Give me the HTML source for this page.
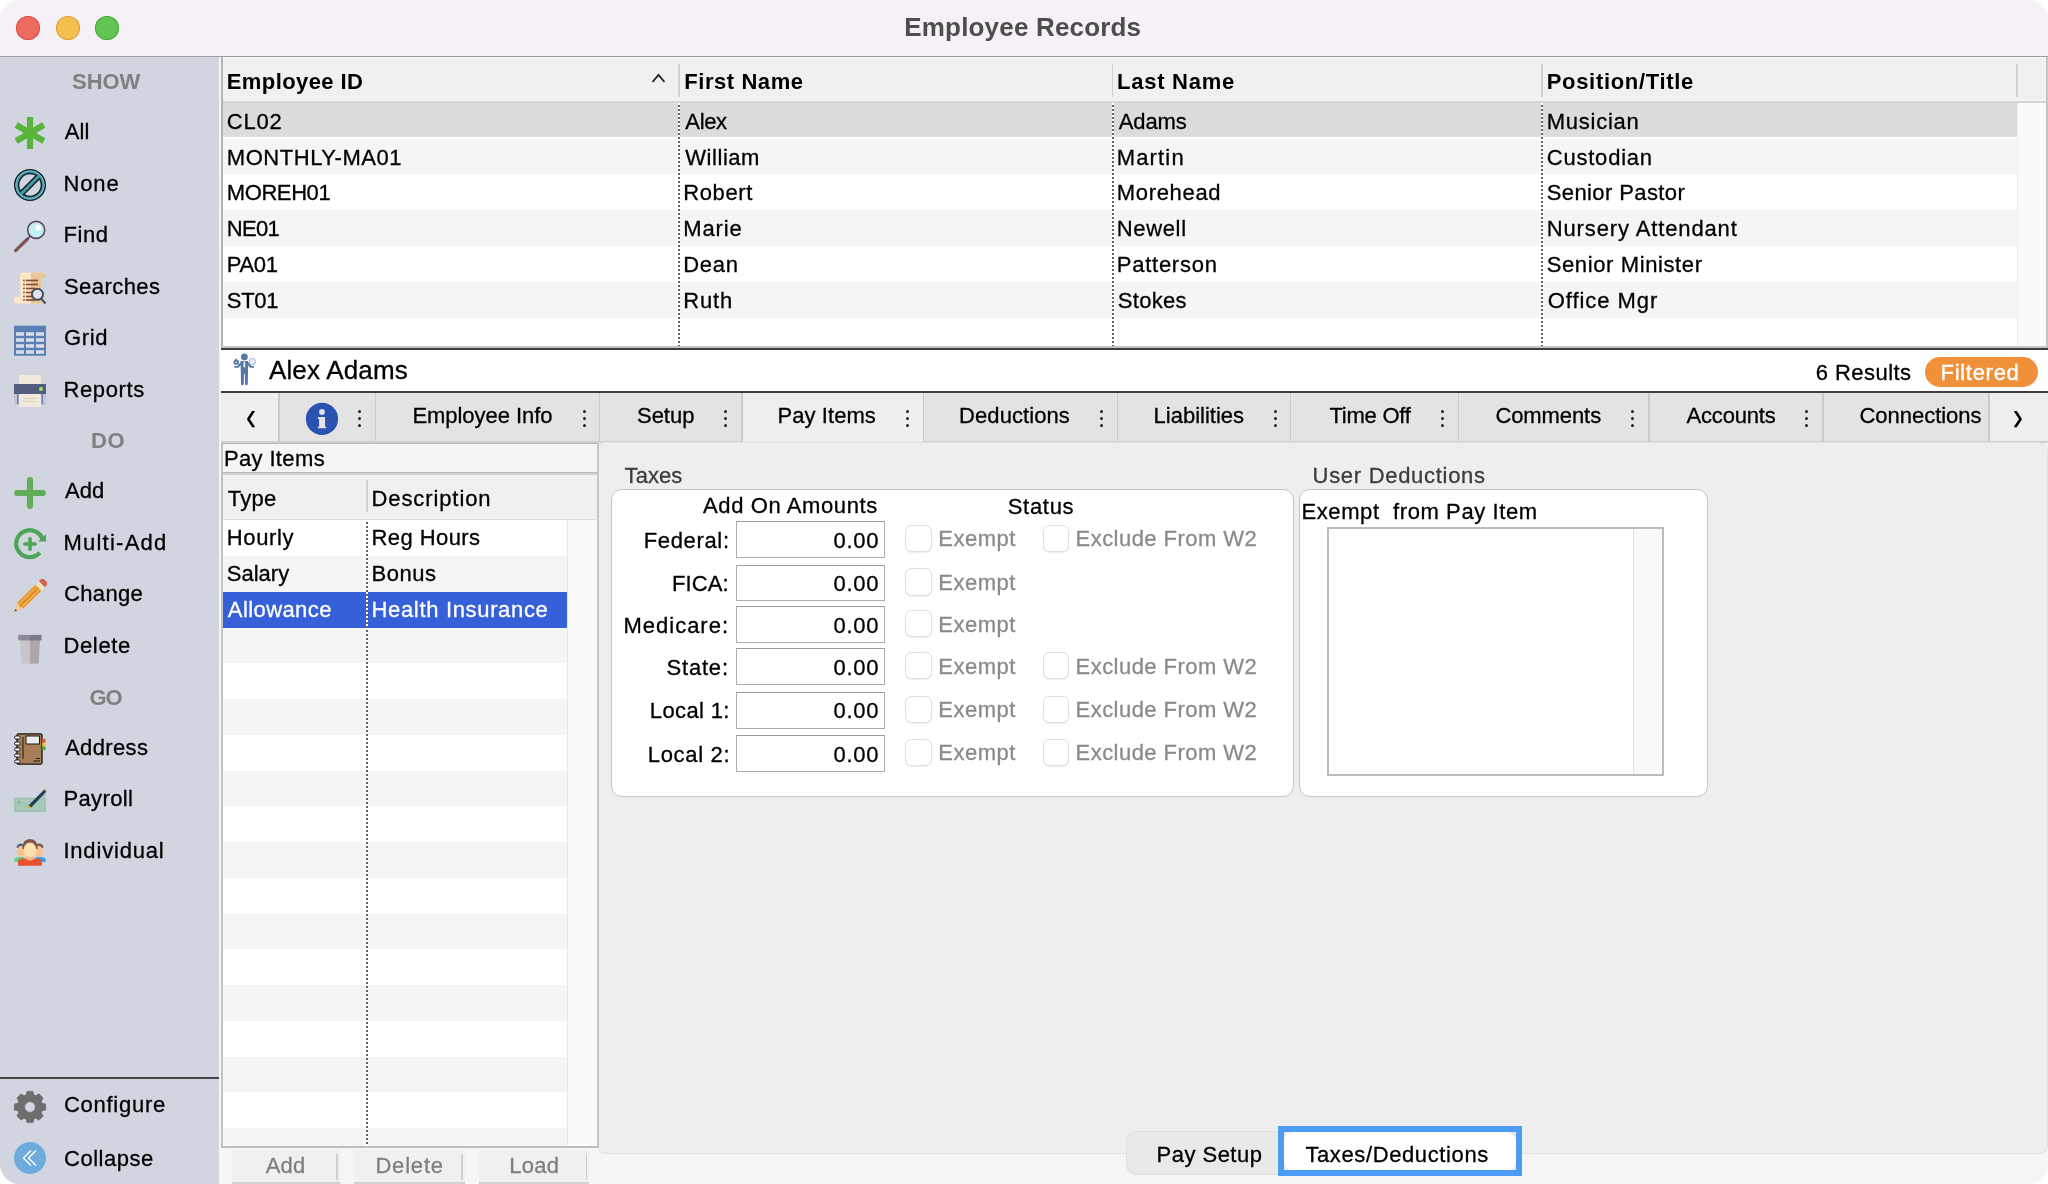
<!DOCTYPE html>
<html><head><meta charset="utf-8"><title>Employee Records</title>
<style>
html,body{margin:0;padding:0;background:#fff;}
body{width:2048px;height:1184px;overflow:hidden;position:relative;font-family:"Liberation Sans",sans-serif;}
#win{position:absolute;left:0;top:0;width:2048px;height:1184px;border-radius:20px;overflow:hidden;background:#f6f6f6;}
.t{position:absolute;white-space:pre;line-height:1;will-change:opacity;}
.r{position:absolute;}
.i{position:absolute;overflow:visible;}
.dot{position:absolute;width:2px;background:repeating-linear-gradient(to bottom,#fff 0,#fff 2px,#626262 2px,#626262 4px);}
</style></head><body><div id="win">

<div class="r" style="left:0.00px;top:0.00px;width:2048.00px;height:56.00px;background:#f6f0f7;"></div>
<div class="r" style="left:0.00px;top:55.60px;width:2048.00px;height:1.40px;background:#9e9e9e;"></div>
<div class="r" style="left:16px;top:15.7px;width:24px;height:24px;border-radius:50%;background:#ec6a5e;box-shadow:inset 0 0 0 1px #d55246;"></div>
<div class="r" style="left:56px;top:15.7px;width:24px;height:24px;border-radius:50%;background:#f5bf4f;box-shadow:inset 0 0 0 1px #d9a13c;"></div>
<div class="r" style="left:95.3px;top:15.7px;width:24px;height:24px;border-radius:50%;background:#61c554;box-shadow:inset 0 0 0 1px #4ea73f;"></div>
<div class="t" id="t0" style="top:14px;font-size:26px;color:#4d4d4d;font-weight:700;letter-spacing:0.180px;left:904.25px;">Employee Records</div>
<div class="r" style="left:0.00px;top:57.00px;width:218.80px;height:1127.00px;background:#d1d5df;"></div>
<div class="r" style="left:218.80px;top:57.00px;width:2.40px;height:1127.00px;background:#f6f6f6;"></div>
<div class="t" id="t1" style="top:71px;font-size:22px;color:#808080;font-weight:700;letter-spacing:-0.067px;left:72.08px;">SHOW</div>
<div class="t" id="t2" style="top:430px;font-size:22px;color:#808080;font-weight:700;letter-spacing:0.700px;left:91.00px;">DO</div>
<div class="t" id="t3" style="top:687px;font-size:22px;color:#808080;font-weight:700;letter-spacing:-1.000px;left:89.49px;">GO</div>
<div class="t" id="t4" style="top:121px;font-size:22px;color:#000;-webkit-text-stroke:0.3px #000;letter-spacing:0.150px;left:64.70px;">All</div>
<svg class="i" style="left:14px;top:117.0px" width="32" height="32" viewBox="0 0 32 32"><g stroke="#5ab43c" stroke-width="6.2" stroke-linecap="butt"><line x1="16" y1="0" x2="16" y2="32"/><line x1="2.2" y1="8" x2="29.8" y2="24"/><line x1="2.2" y1="24" x2="29.8" y2="8"/></g></svg>
<div class="t" id="t5" style="top:173px;font-size:22px;color:#000;-webkit-text-stroke:0.3px #000;letter-spacing:0.900px;left:63.40px;">None</div>
<svg class="i" style="left:14px;top:168.8px" width="32" height="32" viewBox="0 0 32 32"><circle cx="16" cy="16" r="15.2" fill="none" stroke="#12222a" stroke-width="1.7"/><circle cx="16" cy="16" r="13.2" fill="none" stroke="#4699a9" stroke-width="2.9"/><circle cx="16" cy="16" r="14" fill="none" stroke="#9ad6de" stroke-width="0.7" opacity="0.7"/><circle cx="16" cy="16" r="11.4" fill="none" stroke="#12222a" stroke-width="1.5"/><line x1="7.6" y1="24.4" x2="24.4" y2="7.6" stroke="#12222a" stroke-width="5.8"/><line x1="6.8" y1="25.2" x2="25.2" y2="6.8" stroke="#4699a9" stroke-width="2.9"/></svg>
<div class="t" id="t6" style="top:224px;font-size:22px;color:#000;-webkit-text-stroke:0.3px #000;letter-spacing:0.633px;left:63.40px;">Find</div>
<svg class="i" style="left:14px;top:220.2px" width="32" height="32" viewBox="0 0 32 32"><line x1="1.6" y1="30.6" x2="13.2" y2="19.2" stroke="#80554f" stroke-width="3.3" stroke-linecap="round"/><line x1="12.6" y1="19.8" x2="16.6" y2="15.8" stroke="#5b4a5c" stroke-width="1.8"/><circle cx="22.2" cy="9.9" r="8.5" fill="#c6f0f8" stroke="#5b4a5c" stroke-width="1.6"/><circle cx="24.4" cy="7.8" r="2.7" fill="#fff"/></svg>
<div class="t" id="t7" style="top:276px;font-size:22px;color:#000;-webkit-text-stroke:0.3px #000;letter-spacing:0.443px;left:64.00px;">Searches</div>
<svg class="i" style="left:14px;top:271.8px" width="32" height="32" viewBox="0 0 32 32"><path d="M6 3 Q6 0.5 9 0.5 L29 0.5 Q32 0.5 32 3 L32 6 L27 6 L27 31.5 L3 31.5 Q0 31.5 0 28.5 L0 25 L6 25 Z" fill="#fbe6c6"/><path d="M17 0.5 L29 0.5 Q32 0.5 32 3 L32 6 L27 6 L27 31.5 L17 31.5 Z" fill="#e8c596"/><g stroke="#8f4a32" stroke-width="1.7"><line x1="12" y1="8.5" x2="24" y2="8.5"/><line x1="12" y1="12.5" x2="24" y2="12.5"/><line x1="12" y1="16.5" x2="21" y2="16.5"/><line x1="12" y1="20.5" x2="19" y2="20.5"/><line x1="12" y1="24.5" x2="19" y2="24.5"/><line x1="12" y1="28" x2="21" y2="28"/></g><g fill="#8f4a32"><circle cx="10" cy="8.5" r="0.9"/><circle cx="10" cy="12.5" r="0.9"/><circle cx="10" cy="16.5" r="0.9"/><circle cx="10" cy="20.5" r="0.9"/><circle cx="10" cy="24.5" r="0.9"/><circle cx="10" cy="28" r="0.9"/></g><line x1="27.5" y1="27" x2="31.5" y2="31.5" stroke="#4b4b55" stroke-width="2"/><circle cx="23.5" cy="22.3" r="5.5" fill="#dde1f2" stroke="#484c56" stroke-width="2"/></svg>
<div class="t" id="t8" style="top:327px;font-size:22px;color:#000;-webkit-text-stroke:0.3px #000;letter-spacing:0.600px;left:64.00px;">Grid</div>
<svg class="i" style="left:14px;top:323.4px" width="32" height="32" viewBox="0 0 32 32"><rect x="0" y="2.7" width="32" height="30" fill="#5a7fb6"/><rect x="2" y="9.2" width="8" height="3.6" fill="#d8dce6"/><rect x="12" y="9.2" width="8" height="3.6" fill="#d8dce6"/><rect x="22" y="9.2" width="8" height="3.6" fill="#d8dce6"/><rect x="2" y="15.2" width="8" height="3.6" fill="#d8dce6"/><rect x="12" y="15.2" width="8" height="3.6" fill="#d8dce6"/><rect x="22" y="15.2" width="8" height="3.6" fill="#d8dce6"/><rect x="2" y="21.2" width="8" height="3.6" fill="#d8dce6"/><rect x="12" y="21.2" width="8" height="3.6" fill="#d8dce6"/><rect x="22" y="21.2" width="8" height="3.6" fill="#d8dce6"/><rect x="2" y="27.2" width="8" height="3.6" fill="#d8dce6"/><rect x="12" y="27.2" width="8" height="3.6" fill="#d8dce6"/><rect x="22" y="27.2" width="8" height="3.6" fill="#d8dce6"/></svg>
<div class="t" id="t9" style="top:379px;font-size:22px;color:#000;-webkit-text-stroke:0.3px #000;letter-spacing:0.633px;left:63.40px;">Reports</div>
<svg class="i" style="left:14px;top:375.0px" width="32" height="32" viewBox="0 0 32 32"><rect x="5" y="0" width="22" height="12" fill="#efeadb"/><rect x="0" y="17" width="32" height="13" fill="#c4c6c9"/><rect x="3" y="17" width="1.6" height="12" fill="#6f7fc0"/><rect x="27.4" y="17" width="1.6" height="12" fill="#6f7fc0"/><rect x="0" y="9" width="32" height="10" fill="#555d80"/><circle cx="27" cy="14" r="2" fill="#9fe65c"/><rect x="5" y="19" width="22" height="13" fill="#efeadb"/><line x1="9" y1="23.5" x2="23" y2="23.5" stroke="#d8d2b4" stroke-width="1"/><line x1="9" y1="26.5" x2="23" y2="26.5" stroke="#d8d2b4" stroke-width="1"/></svg>
<div class="t" id="t10" style="top:480px;font-size:22px;color:#000;-webkit-text-stroke:0.3px #000;left:65.00px;">Add</div>
<svg class="i" style="left:14px;top:476.7px" width="32" height="32" viewBox="0 0 32 32"><g stroke="#62ad5c" stroke-width="6.2" stroke-linecap="round"><line x1="16" y1="3.2" x2="16" y2="28.8"/><line x1="3.2" y1="16" x2="28.8" y2="16"/></g></svg>
<div class="t" id="t11" style="top:532px;font-size:22px;color:#000;-webkit-text-stroke:0.3px #000;letter-spacing:1.250px;left:63.40px;">Multi-Add</div>
<svg class="i" style="left:14px;top:528.1px" width="32" height="32" viewBox="0 0 32 32"><path d="M 25.8 24.7 A 13.5 13.5 0 1 1 28.8 12.4" fill="none" stroke="#4ea457" stroke-width="4.2"/><path d="M32 6 L32 13.6 L24.2 13.4 Z" fill="#4ea457"/><g stroke="#4ea457" stroke-width="3.6" stroke-linecap="round"><line x1="16" y1="10.8" x2="16" y2="21.2"/><line x1="10.8" y1="16" x2="21.2" y2="16"/></g></svg>
<div class="t" id="t12" style="top:583px;font-size:22px;color:#000;-webkit-text-stroke:0.3px #000;letter-spacing:0.340px;left:64.00px;">Change</div>
<svg class="i" style="left:14px;top:579.5px" width="32" height="32" viewBox="0 0 32 32"><g transform="rotate(45 16 16)"><path d="M11.8 -0.5 L11.8 -2.5 Q11.8 -6 16 -6 Q20.2 -6 20.2 -2.5 L20.2 -0.5 Z" fill="#d2614f"/><rect x="11.8" y="-0.5" width="8.4" height="4.7" fill="#f1ecd2"/><rect x="11.8" y="0.8" width="8.4" height="0.9" fill="#d6d6cf"/><rect x="11.8" y="2.6" width="8.4" height="0.9" fill="#f3e58f"/><rect x="11.8" y="4.2" width="8.4" height="25.8" fill="#e9942d"/><rect x="14.3" y="4.2" width="3.4" height="26.8" fill="#e48d2a"/><line x1="14.1" y1="4.2" x2="14.1" y2="31" stroke="#f4d568" stroke-width="0.9"/><line x1="17.9" y1="4.2" x2="17.9" y2="31" stroke="#f4d568" stroke-width="0.9"/><path d="M11.8 30 L14.1 31.5 L16 30.3 L17.9 31.5 L20.2 30 L16.6 38 L15.4 38 Z" fill="#f6c99b"/><path d="M15 35.3 L17 35.3 L16 38.2 Z" fill="#2c2f3a"/></g></svg>
<div class="t" id="t13" style="top:635px;font-size:22px;color:#000;-webkit-text-stroke:0.3px #000;letter-spacing:0.670px;left:63.40px;">Delete</div>
<svg class="i" style="left:14px;top:631.2px" width="32" height="32" viewBox="0 0 32 32"><rect x="11.4" y="2.6" width="9.2" height="1.6" fill="#dcdad8"/><path d="M6 9 L16 9 L16 32.8 L7.4 32.8 Z" fill="#c8c5ca"/><path d="M16 9 L26 9 L24.6 32.8 L16 32.8 Z" fill="#aaa8ae"/><rect x="4.2" y="3.9" width="11.8" height="5.5" fill="#8d8a97"/><rect x="16" y="3.9" width="11.6" height="5.5" fill="#7c7988"/></svg>
<div class="t" id="t14" style="top:737px;font-size:22px;color:#000;-webkit-text-stroke:0.3px #000;letter-spacing:0.383px;left:65.00px;">Address</div>
<svg class="i" style="left:14px;top:733.0px" width="32" height="32" viewBox="0 0 32 32"><rect x="3" y="0.8" width="25" height="30.4" rx="1.5" fill="#a67f59" stroke="#1a1a1a" stroke-width="1.3"/><line x1="9" y1="4" x2="9" y2="26" stroke="#1a1a1a" stroke-width="1"/><rect x="12" y="3" width="13.5" height="8" fill="#e9ebee" stroke="#1a1a1a" stroke-width="1"/><rect x="28.2" y="6" width="3.3" height="3.6" fill="#e2572b"/><rect x="28.2" y="9.8" width="3.3" height="3.6" fill="#f0c330"/><rect x="28.2" y="13.6" width="3.3" height="3.6" fill="#4caa3a"/><g fill="#fff" stroke="#1a1a1a" stroke-width="1"><rect x="0.5" y="3" width="5.6" height="3" rx="1.5"/><rect x="0.5" y="9" width="5.6" height="3" rx="1.5"/><rect x="0.5" y="15" width="5.6" height="3" rx="1.5"/><rect x="0.5" y="21" width="5.6" height="3" rx="1.5"/><rect x="0.5" y="27" width="5.6" height="3" rx="1.5"/></g><line x1="22" y1="25.5" x2="26" y2="25.5" stroke="#1a1a1a" stroke-width="1"/><line x1="19.5" y1="28" x2="26" y2="28" stroke="#1a1a1a" stroke-width="1"/></svg>
<div class="t" id="t15" style="top:788px;font-size:22px;color:#000;-webkit-text-stroke:0.3px #000;letter-spacing:0.383px;left:63.40px;">Payroll</div>
<svg class="i" style="left:14px;top:787.5px" width="32" height="32" viewBox="0 0 32 32"><rect x="0" y="9.8" width="32" height="14.2" fill="#a6c9b9"/><rect x="0.9" y="10.7" width="30.2" height="12.4" fill="none" stroke="#96bdab" stroke-width="0.8"/><rect x="3.2" y="12.8" width="3.2" height="3.4" fill="#8fb7a5"/><path d="M3 18.5 L12 18.5 M9 15 L20 21" stroke="#9bc0af" stroke-width="0.9" fill="none"/><path d="M30.2 1.6 L32.4 3.8 L17.2 19.4 L14.6 17.2 Z" fill="#1f4256"/><path d="M31 5.5 L32.3 6.8 L25.6 13.8 L24.6 12.6 Z" fill="#aebbc2"/><path d="M17.2 19.4 L14.6 17.2 L13 20.6 Z" fill="#e8aa28"/><path d="M31.2 0.4 L32.6 1.8 L31.6 3 L30 1.6 Z" fill="#e8aa28"/></svg>
<div class="t" id="t16" style="top:840px;font-size:22px;color:#000;-webkit-text-stroke:0.3px #000;letter-spacing:0.817px;left:63.40px;">Individual</div>
<svg class="i" style="left:14px;top:839.0px" width="32" height="32" viewBox="0 0 32 32"><path d="M0 22 Q0 18 5 18 L10 18 L10 23 L0 23 Z" fill="#5fd88a"/><path d="M32 22 Q32 18 27 18 L22 18 L22 23 L32 23 Z" fill="#3da0f0"/><path d="M2.6 9 Q2.6 4.5 7 4.5 Q10 4.5 10 9 Z" fill="#5a5e8a"/><path d="M29.4 9 Q29.4 4.5 25 4.5 Q22 4.5 22 9 Z" fill="#7a5548"/><ellipse cx="7.2" cy="12.5" rx="4.2" ry="5.8" fill="#f7c28e"/><ellipse cx="24.8" cy="12.5" rx="4.2" ry="5.8" fill="#f7c28e"/><path d="M4 22.5 Q4 19.5 8 19.5 L24 19.5 Q28 19.5 28 22.5 L28 25.7 Q28 26.8 27 26.8 L5 26.8 Q4 26.8 4 25.7 Z" fill="#e8532f"/><path d="M12 17 L20 17 L20 20 Q16 23.5 12 20 Z" fill="#f4b684"/><path d="M8.5 10 Q8 0 16 0 Q24 0 23.5 10 Z" fill="#7a5548"/><ellipse cx="16" cy="11" rx="6.4" ry="7.6" fill="#fde0b0"/></svg>
<div class="t" id="t17" style="top:1094px;font-size:22px;color:#000;-webkit-text-stroke:0.3px #000;letter-spacing:0.725px;left:64.00px;">Configure</div>
<svg class="i" style="left:14px;top:1090.5px" width="32" height="32" viewBox="0 0 32 32"><path fill-rule="evenodd" fill="#6e6e6e" stroke="#6e6e6e" stroke-width="0.8" stroke-linejoin="round" d="M12.25,3.87 L13.00,0.39 L19.00,0.39 L19.75,3.87 L21.93,4.77 L24.92,2.84 L29.16,7.08 L27.23,10.07 L28.13,12.25 L31.61,13.00 L31.61,19.00 L28.13,19.75 L27.23,21.93 L29.16,24.92 L24.92,29.16 L21.93,27.23 L19.75,28.13 L19.00,31.61 L13.00,31.61 L12.25,28.13 L10.07,27.23 L7.08,29.16 L2.84,24.92 L4.77,21.93 L3.87,19.75 L0.39,19.00 L0.39,13.00 L3.87,12.25 L4.77,10.07 L2.84,7.08 L7.08,2.84 L10.07,4.77 Z M21.4,16 A5.4,5.4 0 1,0 10.6,16 A5.4,5.4 0 1,0 21.4,16 Z"/></svg>
<div class="t" id="t18" style="top:1148px;font-size:22px;color:#000;-webkit-text-stroke:0.3px #000;letter-spacing:0.521px;left:64.00px;">Collapse</div>
<svg class="i" style="left:14px;top:1142.0px" width="32" height="32" viewBox="0 0 32 32"><circle cx="16" cy="16" r="16" fill="#6eabdd"/><g fill="none" stroke="#fff" stroke-width="1.4"><polyline points="17,8.5 9.5,16 17,23.5"/><polyline points="22,8.5 14.5,16 22,23.5"/></g></svg>
<div class="r" style="left:0.00px;top:1077.00px;width:218.80px;height:2.00px;background:#444;"></div>
<div class="r" style="left:221.20px;top:57.00px;width:1.50px;height:291.00px;background:#b4b4b4;"></div>
<div class="r" style="left:2046.20px;top:57.00px;width:1.80px;height:291.00px;background:#c4c4c4;"></div>
<div class="r" style="left:222.60px;top:57.00px;width:1823.60px;height:1.00px;background:#f8f8f8;"></div>
<div class="r" style="left:222.60px;top:58.00px;width:1823.60px;height:43.50px;background:#f0f0f0;"></div>
<div class="r" style="left:222.60px;top:100.00px;width:1823.60px;height:1.00px;background:#f5f5f5;"></div>
<div class="r" style="left:222.60px;top:101.00px;width:1823.60px;height:1.60px;background:#d4d4d4;"></div>
<div class="r" style="left:222.60px;top:102.60px;width:1823.60px;height:243.00px;background:#fff;"></div>
<div class="r" style="left:222.60px;top:102.60px;width:1794.60px;height:34.60px;background:#dcdcdc;"></div>
<div class="r" style="left:222.60px;top:138.56px;width:1794.60px;height:35.86px;background:#f4f5f5;"></div>
<div class="r" style="left:222.60px;top:210.28px;width:1794.60px;height:35.86px;background:#f4f5f5;"></div>
<div class="r" style="left:222.60px;top:282.00px;width:1794.60px;height:35.86px;background:#f4f5f5;"></div>
<div class="r" style="left:2017.20px;top:102.60px;width:29.00px;height:243.00px;background:#fafafa;"></div>
<div class="r" style="left:2017.20px;top:102.60px;width:1.00px;height:243.00px;background:#ececec;"></div>
<div class="r" style="left:678.00px;top:64.00px;width:1.60px;height:32.50px;background:#d0d0d0;"></div>
<div class="r" style="left:1111.80px;top:64.00px;width:1.60px;height:32.50px;background:#d0d0d0;"></div>
<div class="r" style="left:1541.20px;top:64.00px;width:1.60px;height:32.50px;background:#d0d0d0;"></div>
<div class="r" style="left:2016.40px;top:64.00px;width:1.60px;height:32.50px;background:#d0d0d0;"></div>
<div class="dot" style="left:678px;top:103px;height:242.6px;"></div>
<div class="dot" style="left:1112px;top:103px;height:242.6px;"></div>
<div class="dot" style="left:1541px;top:103px;height:242.6px;"></div>
<div class="t" id="t19" style="top:71px;font-size:22px;color:#000;font-weight:700;letter-spacing:0.400px;left:226.80px;">Employee ID</div>
<div class="t" id="t20" style="top:71px;font-size:22px;color:#000;font-weight:700;letter-spacing:0.556px;left:684.30px;">First Name</div>
<div class="t" id="t21" style="top:71px;font-size:22px;color:#000;font-weight:700;letter-spacing:0.750px;left:1117.00px;">Last Name</div>
<div class="t" id="t22" style="top:71px;font-size:22px;color:#000;font-weight:700;letter-spacing:0.673px;left:1546.75px;">Position/Title</div>
<svg class="i" style="left:651px;top:72px" width="16" height="12" viewBox="0 0 16 12"><polyline points="1.5,10 7.5,3 13.5,10" fill="none" stroke="#222" stroke-width="1.8"/></svg>
<div class="t" id="t23" style="top:111px;font-size:22px;color:#000;-webkit-text-stroke:0.3px #000;letter-spacing:0.750px;left:226.80px;">CL02</div>
<div class="t" id="t24" style="top:111px;font-size:22px;color:#000;-webkit-text-stroke:0.3px #000;letter-spacing:-0.333px;left:685.30px;">Alex</div>
<div class="t" id="t25" style="top:111px;font-size:22px;color:#000;-webkit-text-stroke:0.3px #000;letter-spacing:-0.125px;left:1118.75px;">Adams</div>
<div class="t" id="t26" style="top:111px;font-size:22px;color:#000;-webkit-text-stroke:0.3px #000;letter-spacing:0.750px;left:1546.75px;">Musician</div>
<div class="t" id="t27" style="top:147px;font-size:22px;color:#000;-webkit-text-stroke:0.3px #000;letter-spacing:0.545px;left:226.80px;">MONTHLY-MA01</div>
<div class="t" id="t28" style="top:147px;font-size:22px;color:#000;-webkit-text-stroke:0.3px #000;letter-spacing:0.542px;left:685.30px;">William</div>
<div class="t" id="t29" style="top:147px;font-size:22px;color:#000;-webkit-text-stroke:0.3px #000;letter-spacing:1.150px;left:1116.75px;">Martin</div>
<div class="t" id="t30" style="top:147px;font-size:22px;color:#000;-webkit-text-stroke:0.3px #000;letter-spacing:0.781px;left:1546.75px;">Custodian</div>
<div class="t" id="t31" style="top:182px;font-size:22px;color:#000;-webkit-text-stroke:0.3px #000;letter-spacing:-0.417px;left:226.80px;">MOREH01</div>
<div class="t" id="t32" style="top:182px;font-size:22px;color:#000;-webkit-text-stroke:0.3px #000;letter-spacing:0.600px;left:683.30px;">Robert</div>
<div class="t" id="t33" style="top:182px;font-size:22px;color:#000;-webkit-text-stroke:0.3px #000;letter-spacing:0.679px;left:1116.75px;">Morehead</div>
<div class="t" id="t34" style="top:182px;font-size:22px;color:#000;-webkit-text-stroke:0.3px #000;letter-spacing:0.396px;left:1546.75px;">Senior Pastor</div>
<div class="t" id="t35" style="top:218px;font-size:22px;color:#000;-webkit-text-stroke:0.3px #000;letter-spacing:-0.667px;left:226.80px;">NE01</div>
<div class="t" id="t36" style="top:218px;font-size:22px;color:#000;-webkit-text-stroke:0.3px #000;letter-spacing:0.875px;left:683.30px;">Marie</div>
<div class="t" id="t37" style="top:218px;font-size:22px;color:#000;-webkit-text-stroke:0.3px #000;letter-spacing:0.650px;left:1116.75px;">Newell</div>
<div class="t" id="t38" style="top:218px;font-size:22px;color:#000;-webkit-text-stroke:0.3px #000;letter-spacing:0.875px;left:1546.75px;">Nursery Attendant</div>
<div class="t" id="t39" style="top:254px;font-size:22px;color:#000;-webkit-text-stroke:0.3px #000;letter-spacing:-0.333px;left:226.80px;">PA01</div>
<div class="t" id="t40" style="top:254px;font-size:22px;color:#000;-webkit-text-stroke:0.3px #000;letter-spacing:0.666px;left:683.30px;">Dean</div>
<div class="t" id="t41" style="top:254px;font-size:22px;color:#000;-webkit-text-stroke:0.3px #000;letter-spacing:0.750px;left:1116.75px;">Patterson</div>
<div class="t" id="t42" style="top:254px;font-size:22px;color:#000;-webkit-text-stroke:0.3px #000;letter-spacing:0.607px;left:1546.75px;">Senior Minister</div>
<div class="t" id="t43" style="top:290px;font-size:22px;color:#000;-webkit-text-stroke:0.3px #000;letter-spacing:-0.333px;left:226.80px;">ST01</div>
<div class="t" id="t44" style="top:290px;font-size:22px;color:#000;-webkit-text-stroke:0.3px #000;letter-spacing:0.833px;left:683.30px;">Ruth</div>
<div class="t" id="t45" style="top:290px;font-size:22px;color:#000;-webkit-text-stroke:0.3px #000;letter-spacing:0.300px;left:1117.75px;">Stokes</div>
<div class="t" id="t46" style="top:290px;font-size:22px;color:#000;-webkit-text-stroke:0.3px #000;letter-spacing:0.944px;left:1547.75px;">Office Mgr</div>
<div class="r" style="left:221.20px;top:345.60px;width:1827.00px;height:2.20px;background:#c4c4c4;"></div>
<div class="r" style="left:221.00px;top:347.80px;width:1827.00px;height:1.90px;background:#3e3e3e;"></div>
<div class="r" style="left:221.20px;top:349.70px;width:1827.00px;height:41.30px;background:#fff;"></div>
<div class="r" style="left:221.00px;top:391.00px;width:1827.00px;height:1.90px;background:#3e3e3e;"></div>
<div class="t" id="t47" style="top:357px;font-size:26px;color:#000;-webkit-text-stroke:0.3px #000;letter-spacing:0.178px;left:268.90px;">Alex Adams</div>
<div class="t" id="t48" style="top:362px;font-size:22px;color:#000;-webkit-text-stroke:0.3px #000;letter-spacing:0.462px;left:1815.73px;">6 Results</div>
<div class="r" style="left:1924.7px;top:357.4px;width:113.6px;height:29.4px;border-radius:15px;background:#f0913a;"></div>
<div class="t" id="t49" style="top:362px;font-size:22px;color:#fff;letter-spacing:0.707px;left:1940.50px;-webkit-text-stroke:0.4px #fff;">Filtered</div>
<svg class="i" style="left:230px;top:350px" width="30" height="40" viewBox="230 350 30 40"><g fill="#5878aa"><circle cx="244.4" cy="356.9" r="3.4"/><path d="M241.6 361 L247.2 361 Q248.2 361 248.2 362.2 L248 373 L247.8 384 Q247.8 385.2 246.4 385.2 Q245.1 385.2 245 384 L244.8 374 L244 374 L243.8 384 Q243.7 385.2 242.4 385.2 Q241 385.2 241 384 L240.8 373 L240.6 362.2 Q240.6 361 241.6 361 Z"/><path d="M241.2 361.2 L237.4 366 L234.9 366 Q234.2 366 234.2 366.9 Q234.2 367.8 234.9 367.8 L238.6 367.8 L241.4 364.6 Z"/><path d="M247.6 361.2 L251.4 366 L253.6 366 Q254.3 366 254.3 366.9 Q254.3 367.8 253.6 367.8 L250.2 367.8 L247.4 364.6 Z"/><circle cx="236.2" cy="362.3" r="2.7"/><path d="M234.9 358.6 L236.2 360 L237.6 358.6" stroke="#5878aa" stroke-width="0.9" fill="none"/></g><path d="M243.8 361.6 L245 361.6 L245.3 366.4 L244.4 367.8 L243.5 366.4 Z" fill="#fff"/><circle cx="236.2" cy="362.4" r="0.9" fill="#c9d4e6"/><circle cx="252.5" cy="361.6" r="2.9" fill="none" stroke="#aebdd8" stroke-width="1.3"/><path d="M252.5 360 L252.5 361.8 L253.6 362.4" stroke="#aebdd8" stroke-width="0.8" fill="none"/></svg>
<div class="r" style="left:221.20px;top:392.90px;width:1827.00px;height:49.90px;background:#e3e3e3;"></div>
<div class="r" style="left:221.20px;top:441.30px;width:1827.00px;height:1.70px;background:#d0d0d0;"></div>
<div class="r" style="left:221.20px;top:443.00px;width:1827.00px;height:1.20px;background:#f4f4f4;"></div>
<div class="r" style="left:742.90px;top:392.90px;width:180.50px;height:51.30px;background:#eeeeee;"></div>
<div class="r" style="left:221.20px;top:392.90px;width:57.60px;height:47.90px;background:#eeeeee;"></div>
<div class="r" style="left:1990.00px;top:392.90px;width:58.00px;height:47.90px;background:#eeeeee;"></div>
<div class="r" style="left:278.00px;top:392.90px;width:1.60px;height:48.00px;background:#cbcbcb;"></div>
<div class="r" style="left:374.70px;top:392.90px;width:1.60px;height:48.00px;background:#cbcbcb;"></div>
<div class="r" style="left:598.80px;top:392.90px;width:1.60px;height:48.00px;background:#cbcbcb;"></div>
<div class="r" style="left:741.40px;top:392.90px;width:1.60px;height:48.00px;background:#cbcbcb;"></div>
<div class="r" style="left:922.60px;top:392.90px;width:1.60px;height:48.00px;background:#cbcbcb;"></div>
<div class="r" style="left:1116.60px;top:392.90px;width:1.60px;height:48.00px;background:#cbcbcb;"></div>
<div class="r" style="left:1289.80px;top:392.90px;width:1.60px;height:48.00px;background:#cbcbcb;"></div>
<div class="r" style="left:1457.50px;top:392.90px;width:1.60px;height:48.00px;background:#cbcbcb;"></div>
<div class="r" style="left:1648.20px;top:392.90px;width:1.60px;height:48.00px;background:#cbcbcb;"></div>
<div class="r" style="left:1822.20px;top:392.90px;width:1.60px;height:48.00px;background:#cbcbcb;"></div>
<div class="r" style="left:1988.40px;top:392.90px;width:1.60px;height:48.00px;background:#cbcbcb;"></div>
<div class="t" id="t50" style="top:405px;font-size:22px;color:#000;-webkit-text-stroke:0.3px #000;letter-spacing:-0.050px;left:412.40px;">Employee Info</div>
<div class="r" style="left:582.5px;top:410.3px;width:3px;height:3px;border-radius:50%;background:#222;"></div>
<div class="r" style="left:582.5px;top:417.2px;width:3px;height:3px;border-radius:50%;background:#222;"></div>
<div class="r" style="left:582.5px;top:424.2px;width:3px;height:3px;border-radius:50%;background:#222;"></div>
<div class="t" id="t51" style="top:405px;font-size:22px;color:#000;-webkit-text-stroke:0.3px #000;letter-spacing:-0.025px;left:637.00px;">Setup</div>
<div class="r" style="left:724.2px;top:410.3px;width:3px;height:3px;border-radius:50%;background:#222;"></div>
<div class="r" style="left:724.2px;top:417.2px;width:3px;height:3px;border-radius:50%;background:#222;"></div>
<div class="r" style="left:724.2px;top:424.2px;width:3px;height:3px;border-radius:50%;background:#222;"></div>
<div class="t" id="t52" style="top:405px;font-size:22px;color:#000;-webkit-text-stroke:0.3px #000;letter-spacing:0.050px;left:777.60px;">Pay Items</div>
<div class="r" style="left:905.8px;top:410.3px;width:3px;height:3px;border-radius:50%;background:#222;"></div>
<div class="r" style="left:905.8px;top:417.2px;width:3px;height:3px;border-radius:50%;background:#222;"></div>
<div class="r" style="left:905.8px;top:424.2px;width:3px;height:3px;border-radius:50%;background:#222;"></div>
<div class="t" id="t53" style="top:405px;font-size:22px;color:#000;-webkit-text-stroke:0.3px #000;letter-spacing:0.089px;left:959.00px;">Deductions</div>
<div class="r" style="left:1099.5px;top:410.3px;width:3px;height:3px;border-radius:50%;background:#222;"></div>
<div class="r" style="left:1099.5px;top:417.2px;width:3px;height:3px;border-radius:50%;background:#222;"></div>
<div class="r" style="left:1099.5px;top:424.2px;width:3px;height:3px;border-radius:50%;background:#222;"></div>
<div class="t" id="t54" style="top:405px;font-size:22px;color:#000;-webkit-text-stroke:0.3px #000;letter-spacing:-0.010px;left:1153.60px;">Liabilities</div>
<div class="r" style="left:1274.1px;top:410.3px;width:3px;height:3px;border-radius:50%;background:#222;"></div>
<div class="r" style="left:1274.1px;top:417.2px;width:3px;height:3px;border-radius:50%;background:#222;"></div>
<div class="r" style="left:1274.1px;top:424.2px;width:3px;height:3px;border-radius:50%;background:#222;"></div>
<div class="t" id="t55" style="top:405px;font-size:22px;color:#000;-webkit-text-stroke:0.3px #000;letter-spacing:-0.229px;left:1329.40px;">Time Off</div>
<div class="r" style="left:1441.1px;top:410.3px;width:3px;height:3px;border-radius:50%;background:#222;"></div>
<div class="r" style="left:1441.1px;top:417.2px;width:3px;height:3px;border-radius:50%;background:#222;"></div>
<div class="r" style="left:1441.1px;top:424.2px;width:3px;height:3px;border-radius:50%;background:#222;"></div>
<div class="t" id="t56" style="top:405px;font-size:22px;color:#000;-webkit-text-stroke:0.3px #000;letter-spacing:-0.086px;left:1495.40px;">Comments</div>
<div class="r" style="left:1631.1px;top:410.3px;width:3px;height:3px;border-radius:50%;background:#222;"></div>
<div class="r" style="left:1631.1px;top:417.2px;width:3px;height:3px;border-radius:50%;background:#222;"></div>
<div class="r" style="left:1631.1px;top:424.2px;width:3px;height:3px;border-radius:50%;background:#222;"></div>
<div class="t" id="t57" style="top:405px;font-size:22px;color:#000;-webkit-text-stroke:0.3px #000;letter-spacing:-0.200px;left:1686.60px;">Accounts</div>
<div class="r" style="left:1805.3px;top:410.3px;width:3px;height:3px;border-radius:50%;background:#222;"></div>
<div class="r" style="left:1805.3px;top:417.2px;width:3px;height:3px;border-radius:50%;background:#222;"></div>
<div class="r" style="left:1805.3px;top:424.2px;width:3px;height:3px;border-radius:50%;background:#222;"></div>
<div class="t" id="t58" style="top:405px;font-size:22px;color:#000;-webkit-text-stroke:0.3px #000;letter-spacing:-0.030px;left:1859.50px;">Connections</div>
<div class="r" style="left:358.0px;top:410.3px;width:3px;height:3px;border-radius:50%;background:#222;"></div>
<div class="r" style="left:358.0px;top:417.2px;width:3px;height:3px;border-radius:50%;background:#222;"></div>
<div class="r" style="left:358.0px;top:424.2px;width:3px;height:3px;border-radius:50%;background:#222;"></div>
<div class="t" id="t59" style="top:396px;font-size:40px;color:#000;-webkit-text-stroke:0.3px #000;left:245.60px;transform:scaleX(0.74);transform-origin:0 0;">‹</div>
<div class="t" id="t60" style="top:396px;font-size:40px;color:#000;-webkit-text-stroke:0.3px #000;left:2012.60px;transform:scaleX(0.74);transform-origin:0 0;">›</div>
<svg class="i" style="left:300px;top:398px" width="44" height="42" viewBox="300 398 44 42"><circle cx="322" cy="418.95" r="16.1" fill="#2a52b0"/><circle cx="322" cy="412" r="2.9" fill="#e2e2e2"/><path d="M317.9 417.1 L325.1 417.1 L325.1 426.8 L326.2 426.8 L326.2 428.3 L317.7 428.3 L317.7 426.8 L319.1 426.8 L319.1 419 L317.9 419 Z" fill="#e2e2e2"/></svg>
<div class="r" style="left:221.20px;top:444.20px;width:1827.00px;height:740.00px;background:#f6f6f6;"></div>
<div class="r" style="left:599px;top:443.2px;width:1448.2px;height:709.8px;background:#eeeeee;border-radius:5px 8px 7px 6px;box-shadow:0 0 0 1px #e2e2e2;"></div>
<div class="r" style="left:221.20px;top:443.00px;width:1.40px;height:704.50px;background:#c2c2c2;"></div>
<div class="r" style="left:221.20px;top:443.00px;width:377.40px;height:1.00px;background:#b8b8b8;"></div>
<div class="r" style="left:222.60px;top:444.00px;width:374.80px;height:28.00px;background:#f5f5f5;"></div>
<div class="r" style="left:222.60px;top:472.00px;width:374.80px;height:1.20px;background:#bcbcbc;"></div>
<div class="r" style="left:222.60px;top:473.20px;width:374.80px;height:1.40px;background:#d2d2d2;"></div>
<div class="r" style="left:222.60px;top:474.60px;width:374.80px;height:44.00px;background:#f0f0f0;"></div>
<div class="r" style="left:222.60px;top:518.60px;width:374.80px;height:1.20px;background:#dcdcdc;"></div>
<div class="r" style="left:222.60px;top:519.80px;width:374.80px;height:626.20px;background:#fff;"></div>
<div class="r" style="left:597.30px;top:443.00px;width:1.50px;height:704.50px;background:#c6c6c6;"></div>
<div class="t" id="t61" style="top:448px;font-size:22px;color:#000;-webkit-text-stroke:0.3px #000;letter-spacing:0.370px;left:223.90px;">Pay Items</div>
<div class="t" id="t62" style="top:488px;font-size:22px;color:#000;-webkit-text-stroke:0.3px #000;letter-spacing:0.250px;left:227.80px;">Type</div>
<div class="t" id="t63" style="top:488px;font-size:22px;color:#000;-webkit-text-stroke:0.3px #000;letter-spacing:0.900px;left:371.50px;">Description</div>
<div class="r" style="left:366.00px;top:480.00px;width:1.60px;height:32.00px;background:#d0d0d0;"></div>
<div class="r" style="left:222.60px;top:556.05px;width:344.60px;height:35.75px;background:#f4f5f5;"></div>
<div class="r" style="left:222.60px;top:591.80px;width:344.60px;height:35.75px;background:#3560d8;"></div>
<div class="r" style="left:222.60px;top:627.55px;width:344.60px;height:35.75px;background:#f4f5f5;"></div>
<div class="r" style="left:222.60px;top:699.05px;width:344.60px;height:35.75px;background:#f4f5f5;"></div>
<div class="r" style="left:222.60px;top:770.55px;width:344.60px;height:35.75px;background:#f4f5f5;"></div>
<div class="r" style="left:222.60px;top:842.05px;width:344.60px;height:35.75px;background:#f4f5f5;"></div>
<div class="r" style="left:222.60px;top:913.55px;width:344.60px;height:35.75px;background:#f4f5f5;"></div>
<div class="r" style="left:222.60px;top:985.05px;width:344.60px;height:35.75px;background:#f4f5f5;"></div>
<div class="r" style="left:222.60px;top:1056.55px;width:344.60px;height:35.75px;background:#f4f5f5;"></div>
<div class="r" style="left:222.60px;top:1128.05px;width:344.60px;height:17.95px;background:#f4f5f5;"></div>
<div class="r" style="left:567.20px;top:519.80px;width:29.20px;height:626.50px;background:#fafafa;"></div>
<div class="r" style="left:567.20px;top:519.80px;width:1.00px;height:626.50px;background:#e8e8e8;"></div>
<div class="dot" style="left:366px;top:520px;height:626px;"></div>
<div class="t" id="t64" style="top:527px;font-size:22px;color:#000;-webkit-text-stroke:0.3px #000;letter-spacing:0.650px;left:226.80px;">Hourly</div>
<div class="t" id="t65" style="top:527px;font-size:22px;color:#000;-webkit-text-stroke:0.3px #000;letter-spacing:0.425px;left:371.50px;">Reg Hours</div>
<div class="t" id="t66" style="top:563px;font-size:22px;color:#000;-webkit-text-stroke:0.3px #000;left:226.80px;">Salary</div>
<div class="t" id="t67" style="top:563px;font-size:22px;color:#000;-webkit-text-stroke:0.3px #000;letter-spacing:0.550px;left:371.50px;">Bonus</div>
<div class="t" id="t68" style="top:599px;font-size:22px;color:#fff;-webkit-text-stroke:0.3px #fff;letter-spacing:0.419px;left:227.80px;">Allowance</div>
<div class="t" id="t69" style="top:599px;font-size:22px;color:#fff;-webkit-text-stroke:0.3px #fff;letter-spacing:0.667px;left:371.50px;">Health Insurance</div>
<div class="r" style="left:221.20px;top:1146.00px;width:377.60px;height:1.60px;background:#bdbdbd;"></div>
<div class="r" style="left:231.60px;top:1149.60px;width:108.10px;height:33.00px;background:#f0f0f0;"></div>
<div class="r" style="left:231.60px;top:1182.20px;width:108.10px;height:1.80px;background:#d2d2d2;"></div>
<div class="r" style="left:336.30px;top:1154.00px;width:1.40px;height:26.00px;background:#d0d0d0;"></div>
<div class="t" id="t70" style="top:1155px;font-size:22px;color:#7f7f7f;-webkit-text-stroke:0.3px #7f7f7f;letter-spacing:0.150px;left:265.80px;">Add</div>
<div class="r" style="left:354.20px;top:1149.60px;width:110.50px;height:33.00px;background:#f0f0f0;"></div>
<div class="r" style="left:354.20px;top:1182.20px;width:110.50px;height:1.80px;background:#d2d2d2;"></div>
<div class="r" style="left:461.30px;top:1154.00px;width:1.40px;height:26.00px;background:#d0d0d0;"></div>
<div class="t" id="t71" style="top:1155px;font-size:22px;color:#7f7f7f;-webkit-text-stroke:0.3px #7f7f7f;letter-spacing:0.820px;left:375.39px;">Delete</div>
<div class="r" style="left:479.00px;top:1149.60px;width:110.00px;height:33.00px;background:#f0f0f0;"></div>
<div class="r" style="left:479.00px;top:1182.20px;width:110.00px;height:1.80px;background:#d2d2d2;"></div>
<div class="r" style="left:585.60px;top:1154.00px;width:1.40px;height:26.00px;background:#d0d0d0;"></div>
<div class="t" id="t72" style="top:1155px;font-size:22px;color:#7f7f7f;-webkit-text-stroke:0.3px #7f7f7f;letter-spacing:0.233px;left:509.29px;">Load</div>
<div class="t" id="t73" style="top:465px;font-size:22px;color:#3c3c3c;-webkit-text-stroke:0.3px #3c3c3c;letter-spacing:0.050px;left:624.59px;">Taxes</div>
<div class="r" style="left:610.5px;top:489.2px;width:681.9px;height:306px;background:#fff;border:1px solid #c6c6c6;border-radius:11px;"></div>
<div class="t" id="t74" style="top:495px;font-size:22px;color:#000;-webkit-text-stroke:0.3px #000;letter-spacing:0.612px;left:703.00px;">Add On Amounts</div>
<div class="t" id="t75" style="top:496px;font-size:22px;color:#000;-webkit-text-stroke:0.3px #000;letter-spacing:0.700px;left:1007.75px;">Status</div>
<div class="r" style="left:736.2px;top:520.75px;width:146.4px;height:34.8px;background:#fff;border:1px solid #adadad;border-top-color:#9c9c9c;"></div>
<div class="t" id="t76" style="top:530px;font-size:22px;color:#000;-webkit-text-stroke:0.3px #000;letter-spacing:0.750px;left:833.42px;">0.00</div>
<div class="t" id="t77" style="top:530px;font-size:22px;color:#000;-webkit-text-stroke:0.3px #000;letter-spacing:0.657px;left:643.70px;">Federal:</div>
<div class="r" style="left:905.4px;top:524.5px;width:24.8px;height:25.4px;background:#fff;border:1px solid #e0e0e0;border-radius:6.5px;box-shadow:0 0.6px 1.2px rgba(0,0,0,0.08);"></div>
<div class="t" id="t78" style="top:528px;font-size:22px;color:#8a8a8a;-webkit-text-stroke:0.3px #8a8a8a;letter-spacing:0.500px;left:938.30px;">Exempt</div>
<div class="r" style="left:1042.5px;top:524.5px;width:24.8px;height:25.4px;background:#fff;border:1px solid #e0e0e0;border-radius:6.5px;box-shadow:0 0.6px 1.2px rgba(0,0,0,0.08);"></div>
<div class="t" id="t79" style="top:528px;font-size:22px;color:#8a8a8a;-webkit-text-stroke:0.3px #8a8a8a;letter-spacing:0.457px;left:1075.55px;">Exclude From W2</div>
<div class="r" style="left:736.2px;top:564.5px;width:146.4px;height:34.8px;background:#fff;border:1px solid #adadad;border-top-color:#9c9c9c;"></div>
<div class="t" id="t80" style="top:573px;font-size:22px;color:#000;-webkit-text-stroke:0.3px #000;letter-spacing:0.750px;left:833.42px;">0.00</div>
<div class="t" id="t81" style="top:573px;font-size:22px;color:#000;-webkit-text-stroke:0.3px #000;letter-spacing:0.050px;left:672.08px;">FICA:</div>
<div class="r" style="left:905.4px;top:568.25px;width:24.8px;height:25.4px;background:#fff;border:1px solid #e0e0e0;border-radius:6.5px;box-shadow:0 0.6px 1.2px rgba(0,0,0,0.08);"></div>
<div class="t" id="t82" style="top:572px;font-size:22px;color:#8a8a8a;-webkit-text-stroke:0.3px #8a8a8a;letter-spacing:0.500px;left:938.30px;">Exempt</div>
<div class="r" style="left:736.2px;top:606.25px;width:146.4px;height:34.8px;background:#fff;border:1px solid #adadad;border-top-color:#9c9c9c;"></div>
<div class="t" id="t83" style="top:615px;font-size:22px;color:#000;-webkit-text-stroke:0.3px #000;letter-spacing:0.750px;left:833.42px;">0.00</div>
<div class="t" id="t84" style="top:615px;font-size:22px;color:#000;-webkit-text-stroke:0.3px #000;letter-spacing:0.988px;left:623.52px;">Medicare:</div>
<div class="r" style="left:905.4px;top:610.0px;width:24.8px;height:25.4px;background:#fff;border:1px solid #e0e0e0;border-radius:6.5px;box-shadow:0 0.6px 1.2px rgba(0,0,0,0.08);"></div>
<div class="t" id="t85" style="top:614px;font-size:22px;color:#8a8a8a;-webkit-text-stroke:0.3px #8a8a8a;letter-spacing:0.500px;left:938.30px;">Exempt</div>
<div class="r" style="left:736.2px;top:648px;width:146.4px;height:34.8px;background:#fff;border:1px solid #adadad;border-top-color:#9c9c9c;"></div>
<div class="t" id="t86" style="top:657px;font-size:22px;color:#000;-webkit-text-stroke:0.3px #000;letter-spacing:0.750px;left:833.42px;">0.00</div>
<div class="t" id="t87" style="top:657px;font-size:22px;color:#000;-webkit-text-stroke:0.3px #000;letter-spacing:0.800px;left:666.52px;">State:</div>
<div class="r" style="left:905.4px;top:651.75px;width:24.8px;height:25.4px;background:#fff;border:1px solid #e0e0e0;border-radius:6.5px;box-shadow:0 0.6px 1.2px rgba(0,0,0,0.08);"></div>
<div class="t" id="t88" style="top:656px;font-size:22px;color:#8a8a8a;-webkit-text-stroke:0.3px #8a8a8a;letter-spacing:0.500px;left:938.30px;">Exempt</div>
<div class="r" style="left:1042.5px;top:651.75px;width:24.8px;height:25.4px;background:#fff;border:1px solid #e0e0e0;border-radius:6.5px;box-shadow:0 0.6px 1.2px rgba(0,0,0,0.08);"></div>
<div class="t" id="t89" style="top:656px;font-size:22px;color:#8a8a8a;-webkit-text-stroke:0.3px #8a8a8a;letter-spacing:0.457px;left:1075.55px;">Exclude From W2</div>
<div class="r" style="left:736.2px;top:691.75px;width:146.4px;height:34.8px;background:#fff;border:1px solid #adadad;border-top-color:#9c9c9c;"></div>
<div class="t" id="t90" style="top:700px;font-size:22px;color:#000;-webkit-text-stroke:0.3px #000;letter-spacing:0.750px;left:833.42px;">0.00</div>
<div class="t" id="t91" style="top:700px;font-size:22px;color:#000;-webkit-text-stroke:0.3px #000;letter-spacing:0.372px;left:649.83px;">Local 1:</div>
<div class="r" style="left:905.4px;top:695.5px;width:24.8px;height:25.4px;background:#fff;border:1px solid #e0e0e0;border-radius:6.5px;box-shadow:0 0.6px 1.2px rgba(0,0,0,0.08);"></div>
<div class="t" id="t92" style="top:699px;font-size:22px;color:#8a8a8a;-webkit-text-stroke:0.3px #8a8a8a;letter-spacing:0.500px;left:938.30px;">Exempt</div>
<div class="r" style="left:1042.5px;top:695.5px;width:24.8px;height:25.4px;background:#fff;border:1px solid #e0e0e0;border-radius:6.5px;box-shadow:0 0.6px 1.2px rgba(0,0,0,0.08);"></div>
<div class="t" id="t93" style="top:699px;font-size:22px;color:#8a8a8a;-webkit-text-stroke:0.3px #8a8a8a;letter-spacing:0.457px;left:1075.55px;">Exclude From W2</div>
<div class="r" style="left:736.2px;top:735px;width:146.4px;height:34.8px;background:#fff;border:1px solid #adadad;border-top-color:#9c9c9c;"></div>
<div class="t" id="t94" style="top:744px;font-size:22px;color:#000;-webkit-text-stroke:0.3px #000;letter-spacing:0.750px;left:833.42px;">0.00</div>
<div class="t" id="t95" style="top:744px;font-size:22px;color:#000;-webkit-text-stroke:0.3px #000;letter-spacing:0.658px;left:647.83px;">Local 2:</div>
<div class="r" style="left:905.4px;top:738.75px;width:24.8px;height:25.4px;background:#fff;border:1px solid #e0e0e0;border-radius:6.5px;box-shadow:0 0.6px 1.2px rgba(0,0,0,0.08);"></div>
<div class="t" id="t96" style="top:742px;font-size:22px;color:#8a8a8a;-webkit-text-stroke:0.3px #8a8a8a;letter-spacing:0.500px;left:938.30px;">Exempt</div>
<div class="r" style="left:1042.5px;top:738.75px;width:24.8px;height:25.4px;background:#fff;border:1px solid #e0e0e0;border-radius:6.5px;box-shadow:0 0.6px 1.2px rgba(0,0,0,0.08);"></div>
<div class="t" id="t97" style="top:742px;font-size:22px;color:#8a8a8a;-webkit-text-stroke:0.3px #8a8a8a;letter-spacing:0.457px;left:1075.55px;">Exclude From W2</div>
<div class="t" id="t98" style="top:465px;font-size:22px;color:#3c3c3c;-webkit-text-stroke:0.3px #3c3c3c;letter-spacing:0.704px;left:1312.55px;">User Deductions</div>
<div class="r" style="left:1298.7px;top:488.7px;width:407.7px;height:306.5px;background:#fff;border:1px solid #c6c6c6;border-radius:11px;"></div>
<div class="t" id="t99" style="top:501px;font-size:22px;color:#000;-webkit-text-stroke:0.3px #000;letter-spacing:0.592px;left:1301.50px;">Exempt  from Pay Item</div>
<div class="r" style="left:1326.5px;top:526.6px;width:333.1px;height:245.7px;background:#fff;border:2px solid #bcbcbc;"></div>
<div class="r" style="left:1633.20px;top:528.60px;width:28.40px;height:245.70px;background:#fafafa;"></div>
<div class="r" style="left:1633.20px;top:528.60px;width:1.00px;height:245.70px;background:#e4e4e4;"></div>
<div class="r" style="left:1127px;top:1132px;width:390px;height:41.5px;background:#e9e9e9;border-radius:10px;box-shadow:0 0 0 1px #dedede;"></div>
<div class="r" style="left:1284px;top:1132px;width:232px;height:38.5px;background:#fff;border-radius:9px;"></div>
<div class="r" style="left:1278.1px;top:1126.2px;width:231.7px;height:37.6px;border:6px solid #4b9cf6;"></div>
<div class="t" id="t100" style="top:1144px;font-size:22px;color:#000;-webkit-text-stroke:0.3px #000;letter-spacing:0.487px;left:1156.50px;">Pay Setup</div>
<div class="t" id="t101" style="top:1144px;font-size:22px;color:#000;-webkit-text-stroke:0.3px #000;letter-spacing:0.613px;left:1305.40px;">Taxes/Deductions</div>
</div></body></html>
